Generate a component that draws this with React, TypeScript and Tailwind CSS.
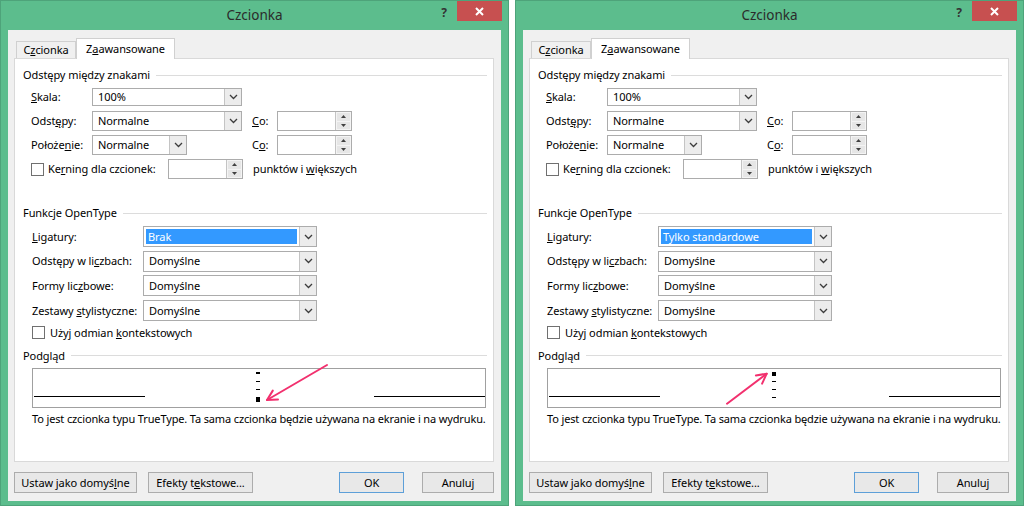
import type { ReactNode } from 'react';

type Variant = 'none' | 'standard';

function Chevron() {
  return (
    <svg width="9" height="6" viewBox="0 0 9 6" className="text-[#3c3c3c]">
      <path d="M1 1l3.5 3.5L8 1" fill="none" stroke="currentColor" strokeWidth={1.3} />
    </svg>
  );
}

function ComboBox({
  value,
  className = '',
  selected = false,
}: {
  value: string;
  className?: string;
  selected?: boolean;
}) {
  return (
    <div className={`flex border border-[#acacac] bg-white ${className}`}>
      <div className="flex min-w-0 flex-1 items-center p-[2px]">
        {selected ? (
          <span className="flex h-full flex-1 items-center bg-[#3399ff] pl-[2px] text-white">{value}</span>
        ) : (
          <span className="pl-[3px]">{value}</span>
        )}
      </div>
      <div className="flex w-[17px] items-center justify-center border-l border-[#c4c4c4] bg-[#ececec]">
        <Chevron />
      </div>
    </div>
  );
}

function SpinBox({ className = '' }: { className?: string }) {
  return (
    <div className={`flex h-[20px] w-[75px] shrink-0 border border-[#acacac] bg-white ${className}`}>
      <div className="flex-1" />
      <div className="flex w-[16px] flex-col gap-px border-l border-[#c4c4c4] bg-[#f4f4f4] p-px">
        <div className="flex flex-1 items-center justify-center bg-[#e6e6e6]">
          <svg width="5" height="3" viewBox="0 0 5 3">
            <path d="M2.5 0L5 3H0z" fill="#404040" />
          </svg>
        </div>
        <div className="flex flex-1 items-center justify-center bg-[#e6e6e6]">
          <svg width="5" height="3" viewBox="0 0 5 3">
            <path d="M0 0h5L2.5 3z" fill="#404040" />
          </svg>
        </div>
      </div>
    </div>
  );
}

function CheckBox() {
  return <span className="h-[13px] w-[13px] shrink-0 border border-[#707070] bg-white" />;
}

function GroupHeader({ children }: { children: ReactNode }) {
  return (
    <div className="flex h-[16px] items-center gap-[6px] pl-[8px] pr-[6px]">
      <span className="whitespace-nowrap">{children}</span>
      <div className="h-px flex-1 bg-[#dcdcdc]" />
    </div>
  );
}

function Button({
  children,
  className = '',
  primary = false,
}: {
  children: ReactNode;
  className?: string;
  primary?: boolean;
}) {
  return (
    <div
      className={`flex h-[21px] items-center justify-center whitespace-nowrap border bg-[#e8e8e8] ${
        primary ? 'border-[#5d9fd8]' : 'border-[#acacac]'
      } ${className}`}
    >
      {children}
    </div>
  );
}

function Preview({ variant }: { variant: Variant }) {
  return (
    <div className="relative ml-[17px] mt-[4px] h-[40px] w-[454px] border border-[#a0a0a0]">
      <svg width="452" height="38" viewBox="0 0 452 38" className="block" shapeRendering="crispEdges">
        <rect x="1" y="27" width="111" height="1" fill="#000" />
        <rect x="341" y="27" width="111" height="1" fill="#000" />
        {variant === 'none' ? (
          <g fill="#000">
            <rect x="223" y="3" width="4" height="2" />
            <rect x="223" y="12" width="4" height="1" />
            <rect x="223" y="20" width="4" height="1" />
            <rect x="223" y="28" width="4" height="5" />
          </g>
        ) : (
          <g fill="#000">
            <rect x="224" y="3" width="4" height="4" />
            <rect x="224" y="12" width="4" height="1" />
            <rect x="224" y="20" width="4" height="1" />
            <rect x="224" y="28" width="4" height="1" />
          </g>
        )}
      </svg>
      {/* red pointer drawn over the sample */}
      <svg
        width="454"
        height="40"
        viewBox="0 0 454 40"
        className="pointer-events-none absolute -left-px -top-px overflow-visible"
      >
        <g fill="none" stroke="#f2306e" strokeWidth={2} strokeLinecap="round" strokeLinejoin="round">
          {variant === 'none' ? (
            <>
              <path d="M295 -3L235 32" />
              <path d="M246 31.6L235 32L240.8 22.6" />
            </>
          ) : (
            <>
              <path d="M180 35.7L219.7 5.7" />
              <path d="M208.9 7.4L219.7 5.7L215.1 15.7" />
            </>
          )}
        </g>
      </svg>
    </div>
  );
}

function FontDialog({ variant }: { variant: Variant }) {
  return (
    <div className="flex h-[506px] w-[509px] shrink-0 flex-col border border-[#4ea37a] bg-[#5cbd8d]">
      <div className="grid h-[29px] grid-cols-[1fr_auto_1fr]">
        <div />
        <div className="pt-[5px] text-[13.5px] leading-[18px] tracking-normal text-[#2b2b2b]">Czcionka</div>
        <div className="flex items-start justify-end pr-[6px]">
          <span className="mr-[10px] mt-[4px] text-[12px] font-bold text-[#333]">?</span>
          <div className="flex h-[20px] w-[45px] items-center justify-center bg-[#c75050]">
            <svg width="9" height="9" viewBox="0 0 9 9">
              <path d="M1 1l7 7M8 1L1 8" stroke="#fff" strokeWidth={2} />
            </svg>
          </div>
        </div>
      </div>

      <div className="mx-[7px] flex h-[471px] flex-col bg-[#f0f0f0] pl-[6px] pr-[7px] pt-[8px]">
        {/* tab strip */}
        <div className="flex h-[20px] items-end pl-[2px]">
          <div className="flex h-[17px] w-[60px] items-center justify-center border border-b-0 border-[#d0d0d0] bg-[#f0f0f0]">
            C<u>z</u>cionka
          </div>
          <div className="relative z-10 -mb-px flex h-[21px] w-[99px] items-center justify-center border border-b-0 border-[#d0d0d0] bg-white">
            Z<u>a</u>awansowane
          </div>
        </div>

        {/* tab page */}
        <div className="flex h-[404px] w-[480px] flex-col border border-[#d9d9d9] bg-white pt-[8px]">
          <GroupHeader>Odstępy między znakami</GroupHeader>

          <div className="mt-[4px] flex flex-col gap-[4px] pl-[16px]">
            <div className="flex h-[20px] items-center">
              <span className="w-[61px]">
                <u>S</u>kala:
              </span>
              <ComboBox value="100%" className="h-[18px] w-[150px]" />
            </div>
            <div className="flex h-[20px] items-center">
              <span className="w-[61px]">
                Odst<u>ę</u>py:
              </span>
              <ComboBox value="Normalne" className="h-[20px] w-[150px]" />
              <span className="ml-[10px] w-[25px]">
                <u>C</u>o:
              </span>
              <SpinBox />
            </div>
            <div className="flex h-[20px] items-center">
              <span className="w-[61px]">
                Położe<u>n</u>ie:
              </span>
              <div className="w-[150px]">
                <ComboBox value="Normalne" className="h-[20px] w-[95px]" />
              </div>
              <span className="ml-[10px] w-[25px]">
                C<u>o</u>:
              </span>
              <SpinBox />
            </div>
            <div className="flex h-[20px] items-center">
              <div className="flex w-[137px] items-center gap-[4px] whitespace-nowrap">
                <CheckBox />
                <span>
                  Ke<u>r</u>ning dla czcionek:
                </span>
              </div>
              <SpinBox />
              <span className="ml-[10px] whitespace-nowrap">
                punktów i <u>w</u>iększych
              </span>
            </div>
          </div>

          <div className="mt-[26px]">
            <GroupHeader>Funkcje OpenType</GroupHeader>
          </div>

          <div className="mt-[5px] flex flex-col gap-[3.7px] pl-[17px]">
            <div className="flex h-[21px] items-center">
              <span className="w-[111px] whitespace-nowrap">
                <u>L</u>igatury:
              </span>
              <ComboBox
                value={variant === 'none' ? 'Brak' : 'Tylko standardowe'}
                className="h-[21px] w-[174px]"
                selected
              />
            </div>
            <div className="flex h-[21px] items-center">
              <span className="w-[111px] whitespace-nowrap">
                Odstępy w li<u>c</u>zbach:
              </span>
              <ComboBox value="Domyślne" className="h-[21px] w-[174px]" />
            </div>
            <div className="flex h-[21px] items-center">
              <span className="w-[111px] whitespace-nowrap">
                Formy lic<u>z</u>bowe:
              </span>
              <ComboBox value="Domyślne" className="h-[21px] w-[174px]" />
            </div>
            <div className="flex h-[21px] items-center">
              <span className="w-[111px] whitespace-nowrap">
                Zestawy <u>s</u>tylistyczne:
              </span>
              <ComboBox value="Domyślne" className="h-[21px] w-[174px]" />
            </div>
            <div className="flex h-[16px] items-center gap-[5px] whitespace-nowrap">
              <CheckBox />
              <span>
                Użyj odmian <u>k</u>ontekstowych
              </span>
            </div>
          </div>

          <div className="mt-[7px]">
            <GroupHeader>Podgląd</GroupHeader>
          </div>
          <Preview variant={variant} />
          <p className="ml-[17px] mt-[3px] h-[16px] whitespace-nowrap leading-[16px] tracking-[-0.14px]">
            To jest czcionka typu TrueType. Ta sama czcionka będzie używana na ekranie i na wydruku.
          </p>
        </div>

        <div className="mt-[10px] flex">
          <Button className="w-[123px]">
            Ustaw jako domyś<u>l</u>ne
          </Button>
          <Button className="ml-[11px] w-[105px]">
            Efekty t<u>e</u>kstowe...
          </Button>
          <Button className="ml-auto w-[65px]" primary>
            OK
          </Button>
          <Button className="ml-[18px] w-[72px]">Anuluj</Button>
        </div>
      </div>
    </div>
  );
}

export default function App() {
  return (
    <div className="flex h-[509px] w-[1024px] gap-[6px] overflow-hidden bg-white font-['Noto_Sans',sans-serif] text-[11px] leading-[16px] tracking-[-0.08px] text-black">
      <FontDialog variant="none" />
      <FontDialog variant="standard" />
    </div>
  );
}
